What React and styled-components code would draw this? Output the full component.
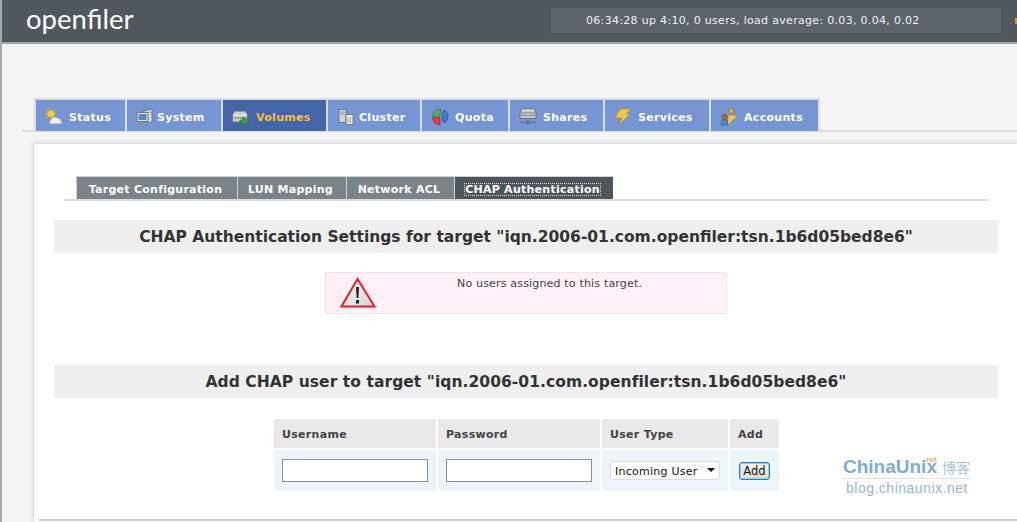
import React from 'react'
import styled, { createGlobalStyle } from 'styled-components'

const GlobalStyle = createGlobalStyle`
  html, body {
    margin: 0;
    height: 522px;
    overflow: hidden;
    background: #f4f4f4;
  }
  * {
    box-sizing: border-box;
  }
`

const StatusIcon = () => (
  <svg width="18" height="18" viewBox="0 0 18 18">
    <path d="M6 0v2.500M0 6h2.500M1.500 1.500l2 2M10.500 1.500l-2 2M1.500 10.500l2-2" stroke="#eaa91f" strokeWidth="1" />
    <circle cx="6" cy="6" r="3.800" fill="#f9cf3a" stroke="#e5a51c" />
    <path d="M6 16c-2 0-2.500-3-.5-3.500C6 9.500 10 7.500 12.500 10c1.500-.5 3 .5 3 2.500 2 .3 2.200 3.500.5 3.500z" fill="#eceeea" stroke="#8f9188" strokeWidth=".8" />
  </svg>
)

const SystemIcon = () => (
  <svg width="18" height="18" viewBox="0 0 18 18">
    <path d="M7 3.500 16 1v13l-4 .5z" fill="#d8dcdc" stroke="#777e80" />
    <rect x="1" y="4.500" width="11" height="9" fill="#e4e6e6" stroke="#6d7477" />
    <rect x="2.500" y="6" width="8" height="6" fill="#4d8dc8" />
    <path d="M4 16h6v1.500H4z" fill="#b0b5b5" stroke="#777e80" strokeWidth=".6" />
    <path d="M14 4h1v1h-1z" fill="#3fa040" />
  </svg>
)

const VolumesIcon = () => (
  <svg width="18" height="18" viewBox="0 0 18 18">
    <path d="M2.500 3h11l2 4v7H.5V7z" fill="#c9cdcc" stroke="#6d7477" />
    <path d="M1 7h14" stroke="#f1f2f2" />
    <path d="M2 10h13" stroke="#777e80" />
    <path d="M8 12h3V9l6 4.500-6 4.500v-3H8z" fill="#3f9f45" stroke="#23702c" strokeWidth=".7" />
  </svg>
)

const ClusterIcon = () => (
  <svg width="18" height="18" viewBox="0 0 18 18">
    <rect x="2" y="1.500" width="7" height="13" fill="#cfd3d2" stroke="#767c7c" />
    <path d="M3.500 4h4M3.500 6h4" stroke="#8c9292" />
    <rect x="9" y="6.500" width="7" height="10" fill="#eceeed" stroke="#767c7c" />
    <path d="M11 9v6M13.500 9v6" stroke="#989e9e" />
  </svg>
)

const QuotaIcon = () => (
  <svg width="18" height="18" viewBox="0 0 18 18">
    <path d="M9.500 1C5 1 2 4 1.500 8.500L9 8z" fill="#5bae53" stroke="#2f7a33" strokeWidth=".7" />
    <path d="M9 9.500 1.500 10C2 14 5 16.500 9 17z" fill="#e83a3a" stroke="#a82020" strokeWidth=".7" />
    <path d="M13 2c2.500 1.200 4 3.800 4 6.500s-1.500 5.300-4 6.500c-2.500-3-2.500-10 0-13z" fill="#3f78d0" stroke="#24509a" strokeWidth=".7" />
  </svg>
)

const SharesIcon = () => (
  <svg width="18" height="18" viewBox="0 0 18 18">
    <path d="M3 .5h12l2 4.500v5.500H1V5z" fill="#c9cdcc" stroke="#6d7477" />
    <path d="M2 5h14M2 7.500h14" stroke="#7c8282" />
    <path d="M1 14.500h16" stroke="#70767a" strokeWidth="1.500" />
    <rect x="7.500" y="12.500" width="3" height="4" fill="#3f78d0" />
  </svg>
)

const ServicesIcon = () => (
  <svg width="18" height="18" viewBox="0 0 18 18">
    <path d="M6 1h11l-5 5h4L5 17l3-7H1z" fill="#f2c744" stroke="#b98b20" strokeWidth=".8" />
  </svg>
)

const AccountsIcon = () => (
  <svg width="18" height="18" viewBox="0 0 18 18">
    <circle cx="11.500" cy="3" r="2.500" fill="#e9a83a" stroke="#9a6a20" strokeWidth=".6" />
    <path d="M8 7h7l2 3-3 1-6 6H7l1-5z" fill="#f1c25f" stroke="#a87825" strokeWidth=".6" />
    <circle cx="4.500" cy="9" r="2.500" fill="#a86b3a" stroke="#6c4424" strokeWidth=".6" />
    <path d="M1 17l1-5h5l1 5z" fill="#4d8dc8" stroke="#2e5f92" strokeWidth=".6" />
  </svg>
)

const WarningIcon = () => (
  <svg width="38" height="32" viewBox="0 0 38 32">
    <defs>
      <linearGradient id="warn" x1="0" y1="0" x2="1" y2="1">
        <stop offset="0" stopColor="#ffffff" />
        <stop offset="1" stopColor="#d0d0d0" />
      </linearGradient>
    </defs>
    <path d="M17.500 2 1.500 29.500h33z" fill="url(#warn)" stroke="#f01c24" strokeWidth="2" strokeLinejoin="miter" />
    <path d="M16 10h3l-.6 11h-1.800z" fill="#222" />
    <rect x="16" y="23" width="3" height="3.500" fill="#222" />
  </svg>
)

const TABS = [
  { label: 'Status', width: 89, Icon: StatusIcon },
  { label: 'System', width: 94, Icon: SystemIcon, gap: 3 },
  { label: 'Volumes', width: 103, Icon: VolumesIcon },
  { label: 'Cluster', width: 92, Icon: ClusterIcon, gap: 4 },
  { label: 'Quota', width: 86, Icon: QuotaIcon },
  { label: 'Shares', width: 93, Icon: SharesIcon },
  { label: 'Services', width: 104, Icon: ServicesIcon },
  { label: 'Accounts', width: 107, Icon: AccountsIcon },
]

const SUB_TABS = [
  { label: 'Target Configuration', width: 160 },
  { label: 'LUN Mapping', width: 108 },
  { label: 'Network ACL', width: 107 },
  { label: 'CHAP Authentication', width: 158, active: true },
]

const App = () => {
  return (
    <Page>
      <GlobalStyle />
      <Header>
        <Logo>openfiler</Logo>
        <Uptime>06:34:28 up 4:10, 0 users, load average: 0.03, 0.04, 0.02</Uptime>
        <OrangeMark />
      </Header>

      <TabBar>
        <TabList>
          {TABS.map(({ label, width, Icon, gap }) => (
            <Tab key={label} $width={width} $gap={gap} $active={label === 'Volumes'}>
              <Icon />
              {label}
            </Tab>
          ))}
        </TabList>
      </TabBar>

      <Panel>
        <SubTabBar>
          <SubTabList>
            {SUB_TABS.map(({ label, width, active }) => (
              <SubTab key={label} $width={width} $active={active}>
                {active ? <FocusLabel>{label}</FocusLabel> : label}
              </SubTab>
            ))}
          </SubTabList>
        </SubTabBar>

        <Heading>CHAP Authentication Settings for target "iqn.2006-01.com.openfiler:tsn.1b6d05bed8e6"</Heading>

        <AlertBox>
          <WarningIcon />
          <AlertText>No users assigned to this target.</AlertText>
        </AlertBox>

        <Heading $gap={51} $spacing={0.06}>Add CHAP user to target "iqn.2006-01.com.openfiler:tsn.1b6d05bed8e6"</Heading>

        <UserTable>
          <HeadCell>Username</HeadCell>
          <HeadCell>Password</HeadCell>
          <HeadCell>User Type</HeadCell>
          <HeadCell>Add</HeadCell>
          <BodyCell><TextInput type="text" /></BodyCell>
          <BodyCell><TextInput type="text" /></BodyCell>
          <BodyCell>
            <TypeSelect>
              Incoming User
              <SelectArrow />
            </TypeSelect>
          </BodyCell>
          <BodyCell><AddButton>Add</AddButton></BodyCell>
        </UserTable>

        <BottomRule />

        <Watermark>
          <WatermarkTop>
            <WatermarkBrand>ChinaUnix<WatermarkNet>.net</WatermarkNet></WatermarkBrand>
            <WatermarkBlog>博客</WatermarkBlog>
          </WatermarkTop>
          <WatermarkUrl>blog.chinaunix.net</WatermarkUrl>
        </Watermark>
      </Panel>
    </Page>
  )
}

const Page = styled.div`
  position: relative;
  width: 1017px;
  height: 522px;
  overflow: hidden;
  background: #f4f4f4;
  border-left: 2px solid #a9a9a9;
  font-family: 'DejaVu Sans', Verdana, sans-serif;
`

const Header = styled.header`
  position: relative;
  display: flex;
  align-items: flex-start;
  justify-content: space-between;
  height: 44px;
  padding: 6px 16px 0 24px;
  background: #50585e;
  border-bottom: 2px solid #a3a3a3;
`

const Logo = styled.div`
  color: #fff;
  font-family: Lato, 'Open Sans', sans-serif;
  font-size: 27.5px;
  font-weight: 400;
  line-height: 26px;
`

const Uptime = styled.div`
  width: 450px;
  height: 25px;
  margin-top: 2px;
  padding-left: 35px;
  background: #5c6369;
  color: #eef1f3;
  font-size: 11px;
  line-height: 25px;
  letter-spacing: 0.31px;
`

const OrangeMark = styled.span`
  position: absolute;
  right: 0;
  top: 18px;
  width: 2px;
  height: 6px;
  background: #e8921c;
`

const TabBar = styled.nav`
  height: 34px;
  margin: 54px 0 0 20px;
  border-bottom: 2px solid #dcdcdc;
`

const TabList = styled.div`
  display: inline-flex;
  gap: 2px;
  height: 34px;
  margin-left: 12px;
  padding: 2px;
  background: #dcdcdc;
`

const Tab = styled.a`
  display: flex;
  align-items: center;
  gap: ${(p) => p.$gap ?? 6}px;
  width: ${(p) => p.$width}px;
  height: 31px;
  padding: 3px 0 0 9px;
  background: ${(p) => (p.$active ? '#4565ab' : '#7595d5')};
  color: ${(p) => (p.$active ? '#f2c230' : '#fff')};
  font-size: 11px;
  font-weight: bold;
  letter-spacing: 0.3px;
`

const Panel = styled.main`
  position: relative;
  height: 392px;
  margin: 11px 0 0 31px;
  padding: 32px 19px 0 20px;
  background: #fff;
  border-top: 1px solid #e0e0e0;
  border-left: 1px solid #e0e0e0;
  box-shadow: -1px -1px 3px #e2e2e2;
`

const SubTabBar = styled.div`
  height: 25px;
  margin: 0 9px 0 10px;
  border-bottom: 2px solid #dddddd;
`

const SubTabList = styled.div`
  display: inline-flex;
  gap: 1px;
  height: 23px;
  margin-left: 12px;
  padding: 1px 0 0 1px;
  background: #cfd3d5;
`

const SubTab = styled.a`
  display: flex;
  align-items: center;
  justify-content: center;
  width: ${(p) => p.$width}px;
  height: 22px;
  padding: 2px 3px 0 0;
  background: ${(p) => (p.$active ? '#4e565c' : '#7a8389')};
  color: #fff;
  font-size: 11px;
  font-weight: bold;
  letter-spacing: 0.26px;
`

const FocusLabel = styled.span`
  outline: 1px dotted #d8d8d8;
  line-height: 11px;
`

const Heading = styled.h2`
  height: 33px;
  margin: ${(p) => p.$gap ?? 19}px 0 0;
  background: #efefef;
  color: #333;
  font-size: 15.5px;
  font-weight: bold;
  line-height: 35px;
  text-align: center;
  letter-spacing: ${(p) => p.$spacing ?? 0}px;
`

const AlertBox = styled.div`
  display: flex;
  align-items: flex-start;
  width: 402px;
  height: 42px;
  margin: 19px 0 0 271px;
  padding: 4px 0 0 14px;
  background: #fef0f6;
  border: 1px solid #f6e2ea;
`

const AlertText = styled.p`
  margin: 0 0 0 79px;
  color: #444;
  font-size: 11px;
  line-height: 13px;
  letter-spacing: 0.18px;
`

const UserTable = styled.div`
  display: grid;
  grid-template-columns: 162px 162px 126px 49px;
  grid-template-rows: 29px 41px;
  gap: 2px;
  width: 505px;
  margin: 21px 0 0 220px;
`

const HeadCell = styled.div`
  padding-left: 8px;
  background: #e9e9e9;
  color: #444;
  font-size: 11px;
  font-weight: bold;
  line-height: 31px;
  letter-spacing: 0.3px;
`

const BodyCell = styled.div`
  display: flex;
  align-items: center;
  padding-left: 8px;
  background: #ecf4fc;
`

const TextInput = styled.input`
  width: 146px;
  height: 23px;
  padding: 2px;
  background: #fff;
  border: 1px solid #909090;
  border-radius: 0;
`

const BottomRule = styled.div`
  height: 2px;
  margin: 28px -19px 0 -15px;
  background: #cccccc;
`

const TypeSelect = styled.div`
  position: relative;
  width: 110px;
  height: 19px;
  padding-left: 4px;
  background: #fff;
  border: 1px solid #dcdcdc;
  border-radius: 2px;
  color: #111;
  font-size: 11px;
  line-height: 19px;
  letter-spacing: 0.25px;
`

const SelectArrow = styled.span`
  position: absolute;
  right: 4px;
  top: 6px;
  border-top: 4px solid #111;
  border-left: 4px solid transparent;
  border-right: 4px solid transparent;
`

const AddButton = styled.button`
  width: 31px;
  height: 18px;
  margin-left: 1px;
  padding: 0;
  background: linear-gradient(#f6f6f2, #dcdcd4);
  border: 1px solid #2f7fb8;
  border-radius: 3px;
  box-shadow: inset 0 0 0 1px #7fd0f4;
  color: #111;
  font-family: inherit;
  font-size: 11.5px;
  line-height: 14px;
`

const Watermark = styled.div`
  position: absolute;
  left: 809px;
  top: 311px;
  width: 127px;
  font-family: 'Liberation Sans', Arial, sans-serif;
`

const WatermarkTop = styled.div`
  display: flex;
  align-items: flex-end;
  justify-content: space-between;
  height: 24px;
  border-bottom: 1px solid #d9e3ec;
`

const WatermarkBrand = styled.span`
  position: relative;
  color: #7dadd4;
  font-size: 19px;
  font-weight: bold;
  line-height: 23px;
`

const WatermarkNet = styled.span`
  position: absolute;
  right: 0;
  top: 1px;
  color: #e8b060;
  font-size: 7px;
  line-height: 7px;
`

const WatermarkBlog = styled.span`
  color: #a6c4dd;
  font-family: 'Noto Sans CJK SC', sans-serif;
  font-size: 14px;
  line-height: 22px;
`

const WatermarkUrl = styled.div`
  margin-left: 3px;
  color: #93b8d8;
  font-size: 14px;
  line-height: 18px;
  letter-spacing: 0.5px;
`

export default App
